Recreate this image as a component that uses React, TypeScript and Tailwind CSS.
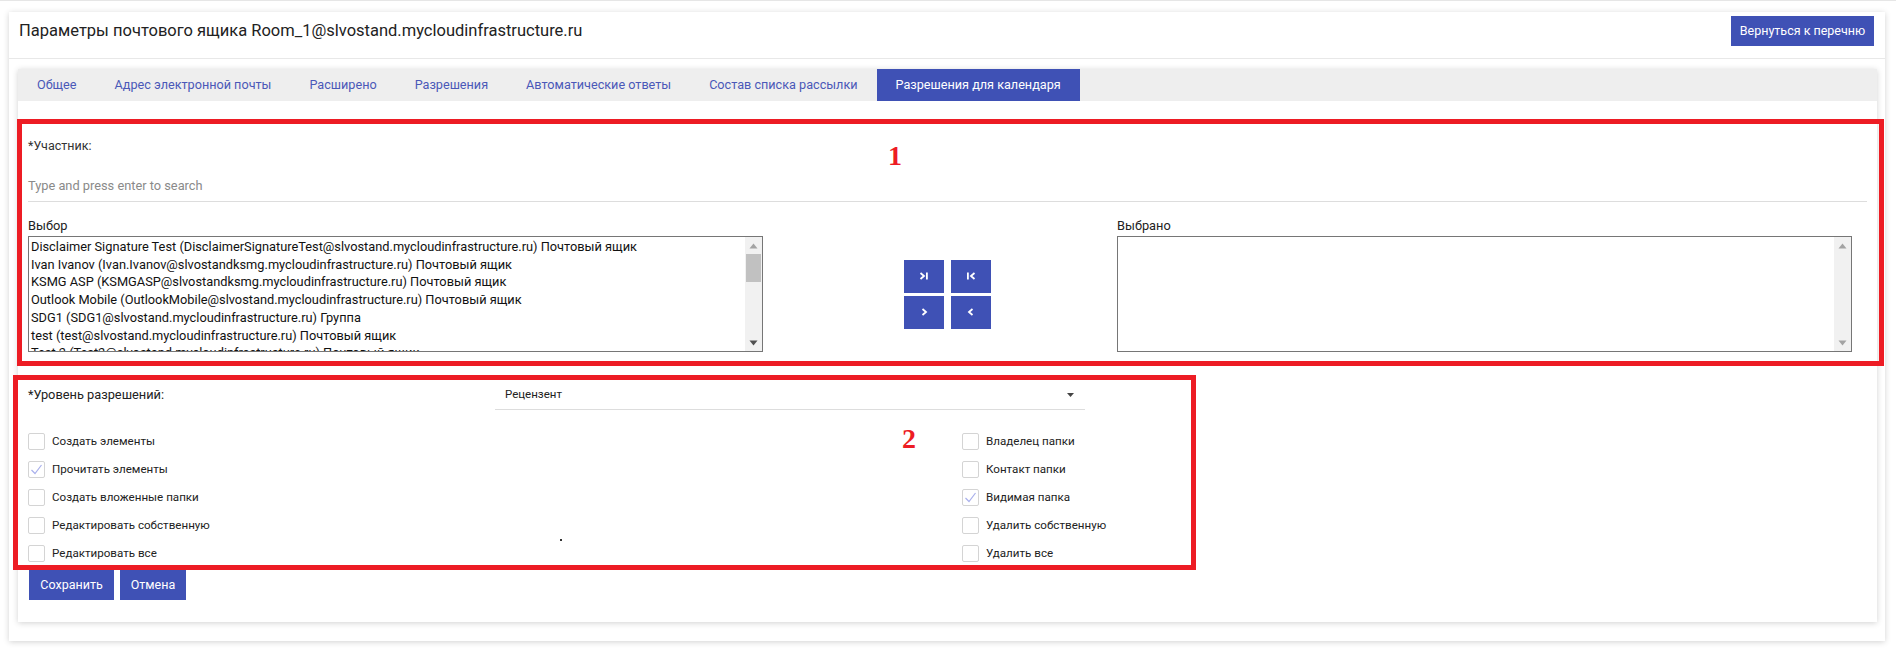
import React from "react";

const TABS = [
    "Общее",
    "Адрес электронной почты",
    "Расширено",
    "Разрешения",
    "Автоматические ответы",
    "Состав списка рассылки",
    "Разрешения для календаря",
];

const MEMBERS = [
    "Disclaimer Signature Test (DisclaimerSignatureTest@slvostand.mycloudinfrastructure.ru) Почтовый ящик",
    "Ivan Ivanov (Ivan.Ivanov@slvostandksmg.mycloudinfrastructure.ru) Почтовый ящик",
    "KSMG ASP (KSMGASP@slvostandksmg.mycloudinfrastructure.ru) Почтовый ящик",
    "Outlook Mobile (OutlookMobile@slvostand.mycloudinfrastructure.ru) Почтовый ящик",
    "SDG1 (SDG1@slvostand.mycloudinfrastructure.ru) Группа",
    "test (test@slvostand.mycloudinfrastructure.ru) Почтовый ящик",
    "Test 2 (Test2@slvostand.mycloudinfrastructure.ru) Почтовый ящик",
];

const LEFT_PERMS = [
    { label: "Создать элементы", checked: false },
    { label: "Прочитать элементы", checked: true },
    { label: "Создать вложенные папки", checked: false },
    { label: "Редактировать собственную", checked: false },
    { label: "Редактировать все", checked: false },
];

const RIGHT_PERMS = [
    { label: "Владелец папки", checked: false },
    { label: "Контакт папки", checked: false },
    { label: "Видимая папка", checked: true },
    { label: "Удалить собственную", checked: false },
    { label: "Удалить все", checked: false },
];

function Checkbox({ label, checked }: { label: string; checked: boolean }) {
    return (
        <div className="flex items-center gap-[7px] h-[17px]">
            <div className="w-[17px] h-[17px] border border-[#d4d4d4] rounded-[2px] bg-white flex items-center justify-center shrink-0">
                {checked && (
                    <svg width="13" height="11" viewBox="0 0 13 11">
                        <path d="M1.5 6 L5 9.5 L11.5 1" fill="none" stroke="#a9b0ec" strokeWidth="1.2" />
                    </svg>
                )}
            </div>
            <span className="text-[11.6px] text-[#222]">{label}</span>
        </div>
    );
}

function ScrollArrow({ up, color }: { up?: boolean; color: string }) {
    return (
        <svg width="9" height="6" viewBox="0 0 9 6">
            <path d={up ? "M4.5 0.5 L8.5 5.5 L0.5 5.5 Z" : "M0.5 0.5 L8.5 0.5 L4.5 5.5 Z"} fill={color} />
        </svg>
    );
}

function TransferIcon({ kind }: { kind: "all-right" | "all-left" | "right" | "left" }) {
    return (
        <svg width="10" height="8" viewBox="0 0 10 8" className="overflow-visible">
            {kind === "all-right" && (
                <>
                    <path d="M1.5 1 L5 4 L1.5 7" fill="none" stroke="white" strokeWidth="1.8" />
                    <rect x="7" y="0.5" width="1.8" height="7" fill="white" />
                </>
            )}
            {kind === "all-left" && (
                <>
                    <rect x="1" y="0.5" width="1.8" height="7" fill="white" />
                    <path d="M8.5 1 L5 4 L8.5 7" fill="none" stroke="white" strokeWidth="1.8" />
                </>
            )}
            {kind === "right" && <path d="M3.5 1 L7 4 L3.5 7" fill="none" stroke="white" strokeWidth="1.8" />}
            {kind === "left" && <path d="M6.5 1 L3 4 L6.5 7" fill="none" stroke="white" strokeWidth="1.8" />}
        </svg>
    );
}

export default function App() {
    return (
        <div className="relative w-[1896px] h-[649px] bg-white font-['Roboto',sans-serif] text-[#222] overflow-hidden">
            <div className="h-px bg-[#e6e6e6]" />

            {/* ── Outer card ───────────────────────────────────── */}
            <div className="ml-[9px] mr-[11px] mt-[11px] bg-white shadow-[0_1px_6px_rgba(0,0,0,0.18)] pb-[19px]">
                <div className="h-[47px] flex items-start justify-between pl-[10px] pr-[11px] pt-[4px] border-b border-[#e8e8e8]">
                    <h1 className="text-[16.5px] leading-[30px] text-[#222]">
                        Параметры почтового ящика Room_1@slvostand.mycloudinfrastructure.ru
                    </h1>
                    <button className="h-[30px] w-[143px] bg-[#3f51b5] text-white text-[12.5px]">
                        Вернуться к перечню
                    </button>
                </div>

                {/* ── Inner card ───────────────────────────────── */}
                <div className="ml-[9px] mr-[8px] mt-[10px] bg-white shadow-[0_1px_6px_rgba(0,0,0,0.18)] pb-[22px]">
                    <div className="h-[32px] bg-[#eeeeee] flex">
                        {TABS.map((t, i) => {
                            const active = i === TABS.length - 1;
                            return (
                                <div
                                    key={t}
                                    className={`h-full flex items-center px-[19px] text-[12.65px] ${active ? "bg-[#3f51b5] text-white" : "text-[#4a58b8]"}`}
                                >
                                    {t}
                                </div>
                            );
                        })}
                    </div>

                    <div className="px-[10px]">
                        {/* ── Participant ── */}
                        <div className="mt-[36px] text-[12.5px] leading-[18px] text-[#333]">*Участник:</div>
                        <div className="mt-[22px] h-[25px] border-b border-[#dddddd] text-[12.8px] leading-[18px] text-[#8a8a8a]">
                            Type and press enter to search
                        </div>

                        <div className="flex mt-[15px]">
                            <div className="w-[735px]">
                                <div className="text-[12.8px] leading-[18px] text-[#222]">Выбор</div>
                                <div className="mt-px h-[116px] border border-[#767676] flex">
                                    <div className="flex-1 overflow-hidden pl-[2px] pt-px text-[12.8px] leading-[17.7px] text-[#111]">
                                        {MEMBERS.map(m => (
                                            <div key={m} className="whitespace-nowrap">{m}</div>
                                        ))}
                                    </div>
                                    <div className="w-[17px] bg-[#f1f1f1] flex flex-col items-center">
                                        <div className="h-[17px] flex items-center justify-center">
                                            <ScrollArrow up color="#a3a3a3" />
                                        </div>
                                        <div className="w-[15px] h-[28px] bg-[#c1c1c1]" />
                                        <div className="flex-1" />
                                        <div className="h-[17px] flex items-center justify-center">
                                            <ScrollArrow color="#505050" />
                                        </div>
                                    </div>
                                </div>
                            </div>

                            <div className="w-[354px] self-end h-[116px] flex items-center pl-[141px]">
                                <div className="grid grid-cols-[40px_40px] gap-x-[7px] gap-y-[3px]">
                                    <button className="w-[40px] h-[33px] bg-[#3f51b5] flex items-center justify-center">
                                        <TransferIcon kind="all-right" />
                                    </button>
                                    <button className="w-[40px] h-[33px] bg-[#3f51b5] flex items-center justify-center">
                                        <TransferIcon kind="all-left" />
                                    </button>
                                    <button className="w-[40px] h-[33px] bg-[#3f51b5] flex items-center justify-center">
                                        <TransferIcon kind="right" />
                                    </button>
                                    <button className="w-[40px] h-[33px] bg-[#3f51b5] flex items-center justify-center">
                                        <TransferIcon kind="left" />
                                    </button>
                                </div>
                            </div>

                            <div className="w-[735px]">
                                <div className="text-[12.8px] leading-[18px] text-[#222]">Выбрано</div>
                                <div className="mt-px h-[116px] border border-[#767676] flex">
                                    <div className="flex-1" />
                                    <div className="w-[17px] bg-[#f1f1f1] flex flex-col items-center justify-between">
                                        <div className="h-[17px] flex items-center justify-center">
                                            <ScrollArrow up color="#a3a3a3" />
                                        </div>
                                        <div className="h-[17px] flex items-center justify-center">
                                            <ScrollArrow color="#a3a3a3" />
                                        </div>
                                    </div>
                                </div>
                            </div>
                        </div>

                        {/* ── Permission level ── */}
                        <div className="mt-[28px] flex items-center h-[30px]">
                            <div className="w-[467px] text-[12.8px] text-[#222]">*Уровень разрешений:</div>
                            <div className="w-[590px] h-[30px] border-b border-[#dddddd] flex items-center justify-between pl-[10px] pr-[11px]">
                                <span className="text-[11.5px] text-[#222]">Рецензент</span>
                                <svg width="7" height="4" viewBox="0 0 7 4">
                                    <path d="M0 0 L7 0 L3.5 4 Z" fill="#444" />
                                </svg>
                            </div>
                        </div>

                        <div className="relative mt-[23px] flex">
                            <div className="w-[934px] flex flex-col gap-[11px]">
                                {LEFT_PERMS.map(p => (
                                    <Checkbox key={p.label} label={p.label} checked={p.checked} />
                                ))}
                            </div>
                            <div className="flex flex-col gap-[11px]">
                                {RIGHT_PERMS.map(p => (
                                    <Checkbox key={p.label} label={p.label} checked={p.checked} />
                                ))}
                            </div>
                            <div className="absolute left-[532px] top-[106px] w-[2px] h-[2px] bg-[#333]" />
                        </div>

                        <div className="mt-[8px] flex gap-[6px] pl-px">
                            <button className="w-[85px] h-[30px] bg-[#3f51b5] text-white text-[12.5px]">Сохранить</button>
                            <button className="w-[66px] h-[30px] bg-[#3f51b5] text-white text-[12.5px]">Отмена</button>
                        </div>
                    </div>
                </div>
            </div>

            {/* ── Annotation overlays ──────────────────────────── */}
            <div className="absolute left-[17px] top-[119px] w-[1867px] h-[247px] border-[5px] border-[#ed1c24] pointer-events-none" />
            <div className="absolute left-[13px] top-[375px] w-[1183px] h-[195px] border-[5px] border-[#ed1c24] pointer-events-none" />
            <div className="absolute left-[888px] top-[142px] text-[28px] leading-none font-bold text-[#ed1c24] font-['Liberation_Serif',serif]">1</div>
            <div className="absolute left-[902px] top-[425px] text-[28px] leading-none font-bold text-[#ed1c24] font-['Liberation_Serif',serif]">2</div>
        </div>
    );
}
